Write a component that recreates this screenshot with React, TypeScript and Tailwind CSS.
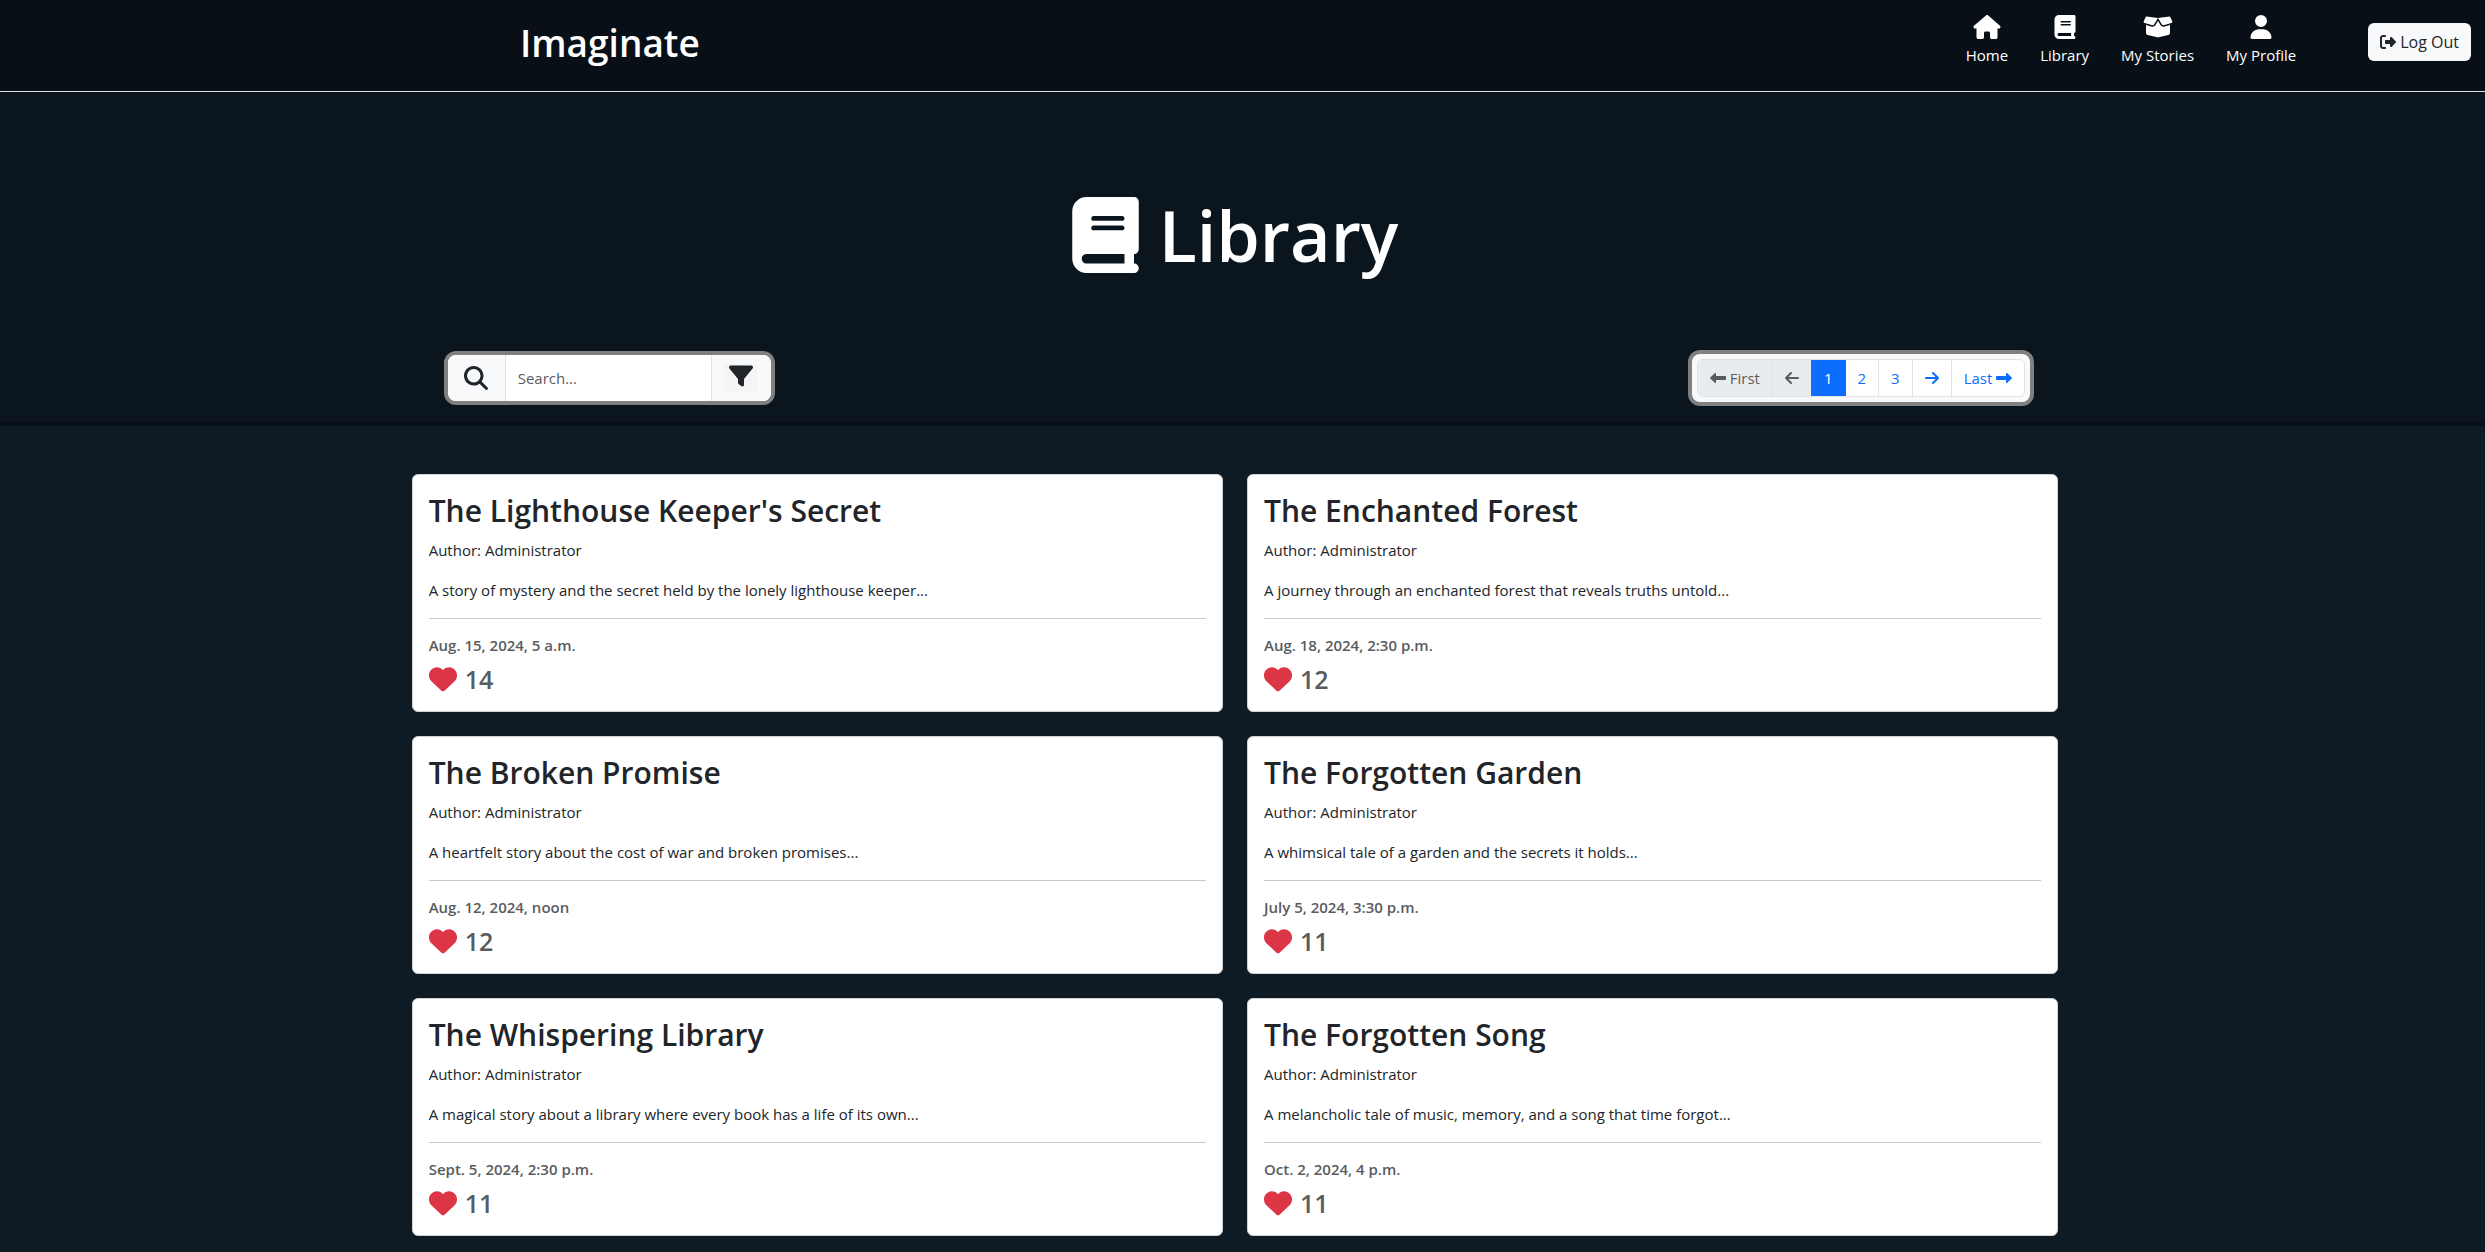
import {
  FaArrowLeft,
  FaArrowRight,
  FaBook,
  FaBoxOpen,
  FaFilter,
  FaHeart,
  FaHouse,
  FaLeftLong,
  FaMagnifyingGlass,
  FaRightFromBracket,
  FaRightLong,
  FaUser,
} from "react-icons/fa6";
import type { IconType } from "react-icons";

const navItems: { label: string; icon: IconType }[] = [
  { label: "Home", icon: FaHouse },
  { label: "Library", icon: FaBook },
  { label: "My Stories", icon: FaBoxOpen },
  { label: "My Profile", icon: FaUser },
];

type Story = { title: string; summary: string; date: string; likes: number };

const stories: Story[] = [
  {
    title: "The Lighthouse Keeper's Secret",
    summary: "A story of mystery and the secret held by the lonely lighthouse keeper...",
    date: "Aug. 15, 2024, 5 a.m.",
    likes: 14,
  },
  {
    title: "The Enchanted Forest",
    summary: "A journey through an enchanted forest that reveals truths untold...",
    date: "Aug. 18, 2024, 2:30 p.m.",
    likes: 12,
  },
  {
    title: "The Broken Promise",
    summary: "A heartfelt story about the cost of war and broken promises...",
    date: "Aug. 12, 2024, noon",
    likes: 12,
  },
  {
    title: "The Forgotten Garden",
    summary: "A whimsical tale of a garden and the secrets it holds...",
    date: "July 5, 2024, 3:30 p.m.",
    likes: 11,
  },
  {
    title: "The Whispering Library",
    summary: "A magical story about a library where every book has a life of its own...",
    date: "Sept. 5, 2024, 2:30 p.m.",
    likes: 11,
  },
  {
    title: "The Forgotten Song",
    summary: "A melancholic tale of music, memory, and a song that time forgot...",
    date: "Oct. 2, 2024, 4 p.m.",
    likes: 11,
  },
];

function NavBar() {
  return (
    <nav className="flex h-[92px] items-start border-b border-[#dee2e6] bg-[#080f16] pr-[14px] text-white">
      <a href="#" className="ml-[520px] pt-4 text-[37px] leading-[54px] font-semibold">
        Imaginate
      </a>
      <ul className="ml-auto flex gap-8 pt-[15px]">
        {navItems.map(({ label, icon: Icon }) => (
          <li key={label}>
            <a href="#" className="flex flex-col items-center gap-1">
              <Icon className="h-6 w-[30px]" />
              <span className="leading-6">{label}</span>
            </a>
          </li>
        ))}
      </ul>
      <button
        type="button"
        className="mt-[23px] ml-[72px] flex h-[38px] items-center gap-1 rounded-md bg-[#f8f9fa] px-3 text-base text-[#212529]"
      >
        <FaRightFromBracket className="size-4" />
        Log Out
      </button>
    </nav>
  );
}

function SearchBox() {
  return (
    <form className="flex h-[54px] w-[331px] overflow-hidden rounded-xl border-4 border-[#808080] bg-white">
      <label
        htmlFor="story-search"
        className="flex w-[58px] items-center justify-center border-r border-[#dee2e6] bg-[#f8f9fa] text-[#212529]"
      >
        <FaMagnifyingGlass className="size-6" />
      </label>
      <input
        id="story-search"
        type="search"
        aria-label="Search stories"
        placeholder="Search..."
        className="min-w-0 flex-1 px-3 text-[#212529] outline-none placeholder:text-[#595c5f]"
      />
      <div className="flex w-[60px] items-center justify-center border-l border-[#dee2e6] bg-[#f8f9fa]">
        <button type="button" aria-label="Filter" className="flex h-[29px] w-[34px] items-start justify-center bg-[#f5f5f5] text-[#212529]">
          <FaFilter className="size-6" />
        </button>
      </div>
    </form>
  );
}

function Pagination() {
  return (
    <div className="rounded-xl border-4 border-[#808080] bg-[#f8f9fa] p-[5px]">
      <ul className="flex h-[38px] divide-x divide-[#dee2e6] overflow-hidden rounded-md border border-[#dee2e6] bg-white text-[#0d6efd]">
        <li className="flex">
          <button type="button" disabled className="flex items-center gap-1 bg-[#e9ecef] px-3 text-[#595c5f]">
            <FaLeftLong className="size-4" />
            First
          </button>
        </li>
        <li className="flex">
          <button type="button" disabled aria-label="Previous page" className="flex items-center bg-[#e9ecef] px-3 text-[#595c5f]">
            <FaArrowLeft className="h-4 w-[14px]" />
          </button>
        </li>
        <li className="flex">
          <a href="#" aria-current="page" className="-m-px flex items-center bg-[#0d6efd] px-[13px] text-white">
            1
          </a>
        </li>
        <li className="flex">
          <a href="#" className="flex items-center px-3">
            2
          </a>
        </li>
        <li className="flex">
          <a href="#" className="flex items-center px-3">
            3
          </a>
        </li>
        <li className="flex">
          <a href="#" aria-label="Next page" className="flex items-center px-3">
            <FaArrowRight className="h-4 w-[14px]" />
          </a>
        </li>
        <li className="flex">
          <a href="#" className="flex items-center gap-1 px-3">
            Last
            <FaRightLong className="size-4" />
          </a>
        </li>
      </ul>
    </div>
  );
}

function StoryCard({ title, summary, date, likes }: Story) {
  return (
    <article className="rounded-md border border-[#cfd2d4] bg-white p-4 text-[#212529]">
      <h2 className="mb-2 text-[30px] leading-[39px] font-semibold">{title}</h2>
      <p className="mb-4 leading-6">Author: Administrator</p>
      <p className="leading-6">{summary}</p>
      <hr className="my-4 border-[#c8c9ca]" />
      <p className="mb-2 leading-5 font-semibold text-[#595c5f]">{date}</p>
      <p className="flex items-center gap-2 text-[25px] leading-8 font-semibold text-[#595c5f]">
        <FaHeart className="size-7 text-[#dc3545]" />
        {likes}
      </p>
    </article>
  );
}

export default function App() {
  return (
    <div className="min-h-screen bg-[#0e1a24] font-['Open_Sans','Noto_Sans',sans-serif] text-[15px]">
      <NavBar />
      <header className="border-b-4 border-[#080f16] bg-[#0b151e] pt-[90px] pr-[15px]">
        <h1 className="flex items-center justify-center gap-5 text-[70px] leading-[106px] font-semibold text-white">
          <FaBook className="h-[76px] w-[67px]" />
          Library
        </h1>
        <div className="mx-auto mt-[62px] flex w-2/3 items-center justify-between pr-6 pb-4 pl-8">
          <SearchBox />
          <Pagination />
        </div>
      </header>
      <main className="pt-12 pr-[15px]">
        <div className="mx-auto grid w-2/3 grid-cols-2 gap-6">
          {stories.map((story) => (
            <StoryCard key={story.title} {...story} />
          ))}
        </div>
      </main>
    </div>
  );
}
